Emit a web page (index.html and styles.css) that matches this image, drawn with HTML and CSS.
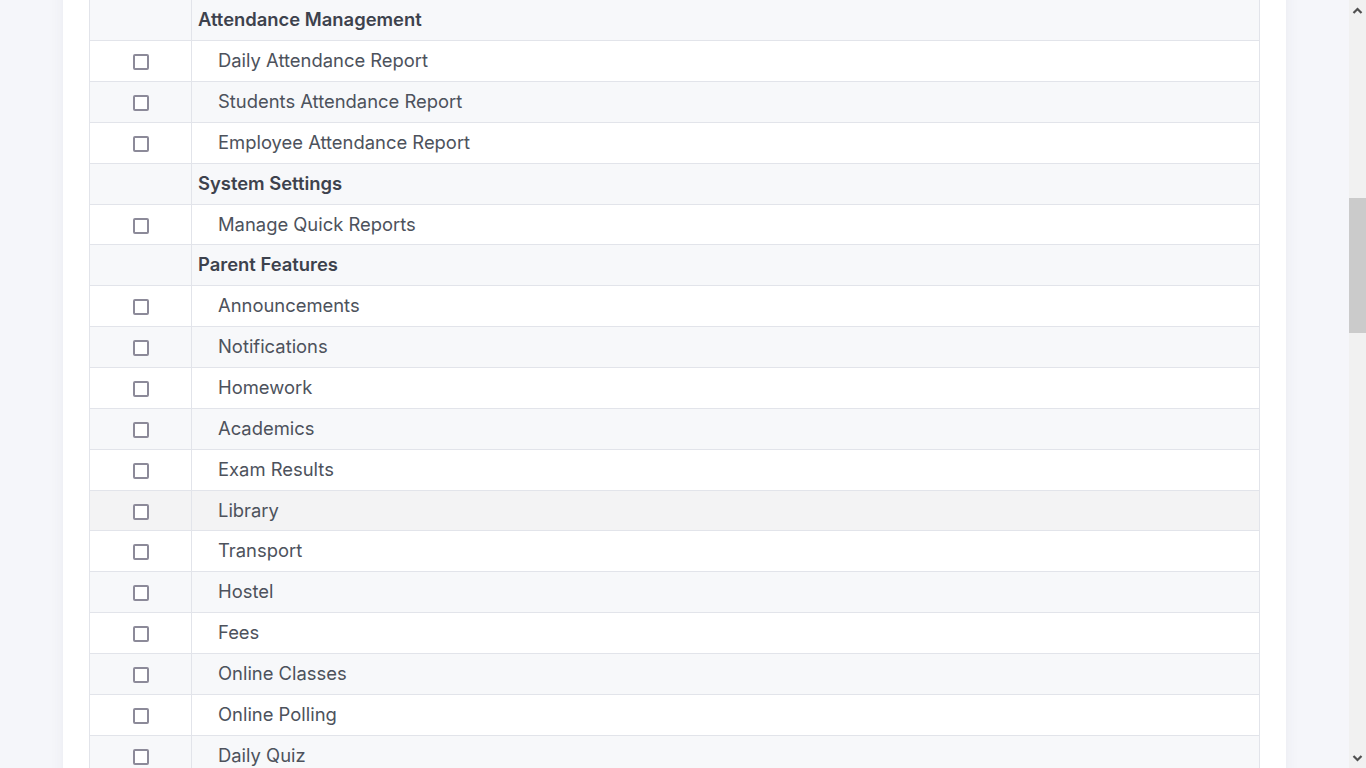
FILE: index.html
```html
<!DOCTYPE html>
<html lang="en">

<head>
    <meta charset="UTF-8">
    <meta name="viewport" content="width=device-width, initial-scale=1.0">
    <title>Role Permissions</title>
    <link rel="stylesheet" href="styles.css">
</head>

<body>

    <div class="page">
        <div class="card">
            <div class="card-header">
                <h2 class="card-title">Assign Permissions</h2>
            </div>
            <div class="card-body">
                <table class="perm-table">
                    <thead>
                        <tr>
                            <th class="col-check">Select</th>
                            <th>Module / Feature</th>
                        </tr>
                    </thead>
                    <tbody id="perm-body"></tbody>
                </table>
                <div class="form-actions">
                    <button class="btn-save">Save Permissions</button>
                </div>
            </div>
        </div>
    </div>

    <!-- window scrollbar, drawn since the capture hides the real one -->
    <div class="scrollbar">
        <svg class="scroll-arrow up" width="17" height="17" viewBox="0 0 17 17">
            <path d="M4.5 11 L8.5 7 L12.5 11" fill="none" stroke="#505050" stroke-width="2.2" />
        </svg>
        <div class="scroll-thumb"></div>
        <svg class="scroll-arrow down" width="17" height="17" viewBox="0 0 17 17">
            <path d="M4.5 6 L8.5 10 L12.5 6" fill="none" stroke="#505050" stroke-width="2.2" />
        </svg>
    </div>

    <script src="script.js"></script>

</body>

</html>
```

FILE: styles.css
```css
html,
body {
    margin: 0;
    padding: 0;
}

body {
    font-family: Inter, "Noto Sans", Arial, sans-serif;
    background-color: #f5f6fa;
    color: #4d525c;
    padding-right: 17px;
}

.page {
    padding: 24px 63px;
}

.card {
    background-color: white;
    box-shadow: 0 0 14px rgba(60, 70, 110, 0.06);
}

.card-header {
    padding: 20px 26px;
    border-bottom: 1px solid #e6e8ee;
}

.card-title {
    margin: 0;
    font-size: 20px;
    font-weight: 600;
    color: #3d424d;
}

.card-body {
    padding: 26px;
}

.perm-table {
    width: 100%;
    border-collapse: collapse;
    font-size: 18.4px;
    line-height: 23.85px;
}

.perm-table th,
.perm-table td {
    border: 1px solid #e2e4ea;
    padding: 8px 6px;
    text-align: left;
}

.perm-table th {
    font-weight: 600;
    color: #3d424d;
}

.perm-table .col-check {
    width: 89px;
    text-align: center;
}

.perm-table tbody tr:nth-child(odd) {
    background-color: #f7f8fa;
}

.perm-table tbody tr.row-hover {
    background-color: #f3f3f4;
}

.perm-table .group-title {
    font-weight: 600;
    color: #3d424d;
}

.perm-table .item-name {
    padding-left: 26px;
}

.check {
    display: inline-block;
    width: 12px;
    height: 12px;
    border: 2px solid #8c8a99;
    border-radius: 2px;
    vertical-align: middle;
    background: white;
}

.form-actions {
    padding-top: 20px;
}

.btn-save {
    font-family: inherit;
    font-size: 16px;
    padding: 10px 22px;
    border: none;
    border-radius: 4px;
    background-color: #5b6be1;
    color: white;
}

.scrollbar {
    position: fixed;
    top: 0;
    right: 0;
    bottom: 0;
    width: 17px;
    background-color: #f1f1f1;
}

.scroll-arrow {
    position: absolute;
    left: 0;
    display: block;
}

.scroll-arrow.up {
    top: 2px;
}

.scroll-arrow.down {
    bottom: 1px;
}

.scroll-thumb {
    position: absolute;
    left: 0;
    right: 0;
    top: 198px;
    height: 135px;
    background-color: #cbcbcb;
}
```

FILE: script.js
```js
const groups = [
    { title: 'Student Management', items: ['Admission', 'Student Details', 'Student Promotion', 'Disabled Students', 'Bulk Delete'] },
    { title: 'Academics', items: ['Class Timetable', 'Subjects', 'Assign Class Teacher', 'Lesson Plan', 'Syllabus Status'] },
    { title: 'Examinations', items: ['Exam Schedule', 'Marks Entry', 'Marks Grade', 'Admit Card'] },
    { title: 'Fees Collection', items: ['Collect Fees', 'Search Due Fees', 'Fees Master', 'Fees Discount'] },
    { title: 'Attendance Management', items: ['Daily Attendance Report', 'Students Attendance Report', 'Employee Attendance Report'] },
    { title: 'System Settings', items: ['Manage Quick Reports'] },
    {
        title: 'Parent Features', items: ['Announcements', 'Notifications', 'Homework', 'Academics', 'Exam Results', 'Library',
            'Transport', 'Hostel', 'Fees', 'Online Classes', 'Online Polling', 'Daily Quiz', 'Study Material', 'Gallery',
            'Events', 'Leave Application', 'Complaints', 'Timeline', 'Profile']
    },
    {
        title: 'Student Features', items: ['Announcements', 'Notifications', 'Homework', 'Class Timetable', 'Lesson Plan',
            'Syllabus Status', 'Exam Results', 'Library', 'Transport', 'Hostel', 'Fees', 'Online Classes', 'Online Exam',
            'Daily Quiz', 'Study Material', 'Apply Leave', 'Profile']
    },
    {
        title: 'Teacher Features', items: ['Announcements', 'Notifications', 'My Timetable', 'Homework', 'Lesson Plan',
            'Mark Attendance', 'Marks Entry', 'Online Classes', 'Daily Quiz', 'Study Material', 'Apply Leave', 'Payslip',
            'Profile', 'Chat', 'Calendar']
    },
    { title: 'Human Resource', items: ['Staff Directory', 'Staff Attendance', 'Payroll', 'Approve Leave', 'Leave Types', 'Department', 'Designation', 'Teacher Rating', 'Disabled Staff', 'Staff ID Card'] }
];

const body = document.getElementById('perm-body');
let html = '';
groups.forEach(group => {
    html += `<tr class="group" data-title="${group.title}"><td></td><td class="group-title">${group.title}</td></tr>`;
    group.items.forEach(item => {
        const hover = group.title === 'Parent Features' && item === 'Library' ? ' row-hover' : '';
        html += `<tr class="item${hover}"><td class="col-check"><span class="check"></span></td><td class="item-name">${item}</td></tr>`;
    });
});
body.innerHTML = html;

// keep the attendance block at the top of the view
const target = body.querySelector('tr[data-title="Attendance Management"]');
window.scrollTo(0, target.getBoundingClientRect().top + window.scrollY);
```
